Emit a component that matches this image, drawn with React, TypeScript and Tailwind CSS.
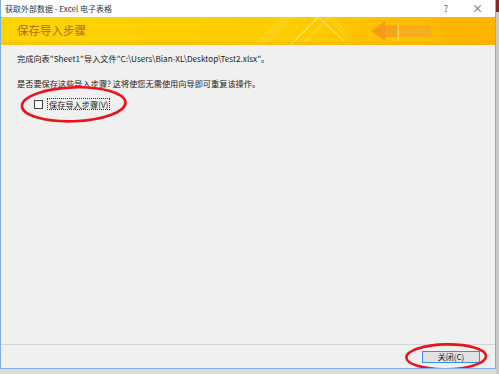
const cjk = '"Noto Sans CJK SC", "Liberation Sans", sans-serif';

function BannerArt() {
  return (
    <svg className="absolute inset-0 h-full w-full" viewBox="0 0 495 28" preserveAspectRatio="none">
      <defs>
        <linearGradient id="bn" x1="0" x2="1" y1="0" y2="0">
          <stop offset="0" stopColor="#ffd400" />
          <stop offset="0.6" stopColor="#ffcc00" />
          <stop offset="1" stopColor="#ffb400" />
        </linearGradient>
      </defs>
      <rect width="495" height="28" fill="url(#bn)" />
      <g stroke="#ffe680" strokeWidth="0.6" opacity="0.8">
        <line x1="255" y1="28" x2="283" y2="0" />
        <line x1="258" y1="28" x2="286" y2="0" />
        <line x1="261" y1="28" x2="289" y2="0" />
        <line x1="264" y1="28" x2="292" y2="0" />
        <line x1="300" y1="28" x2="328" y2="0" />
        <line x1="303" y1="28" x2="331" y2="0" />
        <line x1="352" y1="28" x2="328" y2="0" />
        <line x1="356" y1="28" x2="332" y2="0" />
        <line x1="470" y1="28" x2="495" y2="3" />
        <line x1="474" y1="28" x2="495" y2="7" />
      </g>
      <line x1="290" y1="28" x2="318" y2="0" stroke="#fff3b0" strokeWidth="1" />
      <line x1="318" y1="0" x2="348" y2="28" stroke="#fff3b0" strokeWidth="0.8" />
      <polygon points="370,0 400,0 440,28 340,28" fill="#ffc000" opacity="0.6" />
      <polygon points="371,14 385,4 385,24" fill="#f59a1b" />
      <rect x="385" y="8" width="12" height="12" fill="#f7a21c" />
      <rect x="399" y="8" width="32" height="12" fill="#f9ad1f" />
      <line x1="398" y1="8" x2="398" y2="24" stroke="#fde08a" strokeWidth="0.8" />
      <polygon points="430,0 495,0 495,28 455,28" fill="#ffb300" opacity="0.7" />
      <rect x="0" y="25" width="495" height="3" fill="#f9a90e" opacity="0.35" />
    </svg>
  );
}

export default function App() {
  return (
    <div className="flex h-[374px] w-[499px] bg-[#dcdcdc]" style={{ fontFamily: cjk }}>
      <div className="relative flex h-[369px] w-[496px] flex-col border-x border-b border-[#7aaee6] bg-[#f0f0f0]">
        <div className="flex h-[17px] items-center bg-white pl-[4px] pr-[12px] text-[8px] text-[#333]">
          <span>获取外部数据 - Excel 电子表格</span>
          <span className="ml-auto mr-[24px] text-[9px] text-[#555]">?</span>
          <span className="text-[11px] leading-none text-[#555]">×</span>
        </div>

        <div className="relative h-[28px]">
          <BannerArt />
          <div className="relative flex h-full items-center pl-[16px] text-[11.5px] text-[#b5651d]">保存导入步骤</div>
        </div>

        <div className="flex flex-1 flex-col px-[16px] pt-[8px] text-[8.2px] text-[#222]">
          <p className="leading-[11px]">完成向表"Sheet1"导入文件"C:\Users\Bian-XL\Desktop\Test2.xlsx"。</p>
          <p className="mt-[14px] leading-[11px]">是否要保存这些导入步骤? 这将使您无需使用向导即可重复该操作。</p>
          <div className="ml-[17px] mt-[9px] flex items-center gap-[4px]">
            <span className="h-[9px] w-[9px] border border-[#444] bg-white" />
            <span className="border border-dotted border-[#333] px-[1px] leading-[10px]">保存导入步骤(V)</span>
          </div>
        </div>

        <div className="h-[1px] bg-[#d4d4d4]" />
        <div className="flex h-[23px] items-center justify-end pr-[15px]">
          <button className="flex h-[12px] w-[58px] items-center justify-center border border-[#3c8ee0] bg-[#e1e1e1] text-[8px] leading-none text-[#222]">
            关闭(C)
          </button>
        </div>

        <svg className="pointer-events-none absolute inset-0 h-full w-full" viewBox="0 0 496 369">
          <ellipse cx="73" cy="104.5" rx="52" ry="17" fill="none" stroke="#e8141b" strokeWidth="2.6" transform="rotate(-2 73 104.5)" />
          <ellipse cx="447" cy="358" rx="40" ry="12.5" fill="none" stroke="#e8141b" strokeWidth="2.6" transform="rotate(-1 447 358)" />
        </svg>
      </div>
      <div className="flex w-[3px] flex-col">
        <div className="h-[12px] bg-[#8b2323]" />
        <div className="flex-1 bg-[#c9c9c9]" />
      </div>
    </div>
  );
}
